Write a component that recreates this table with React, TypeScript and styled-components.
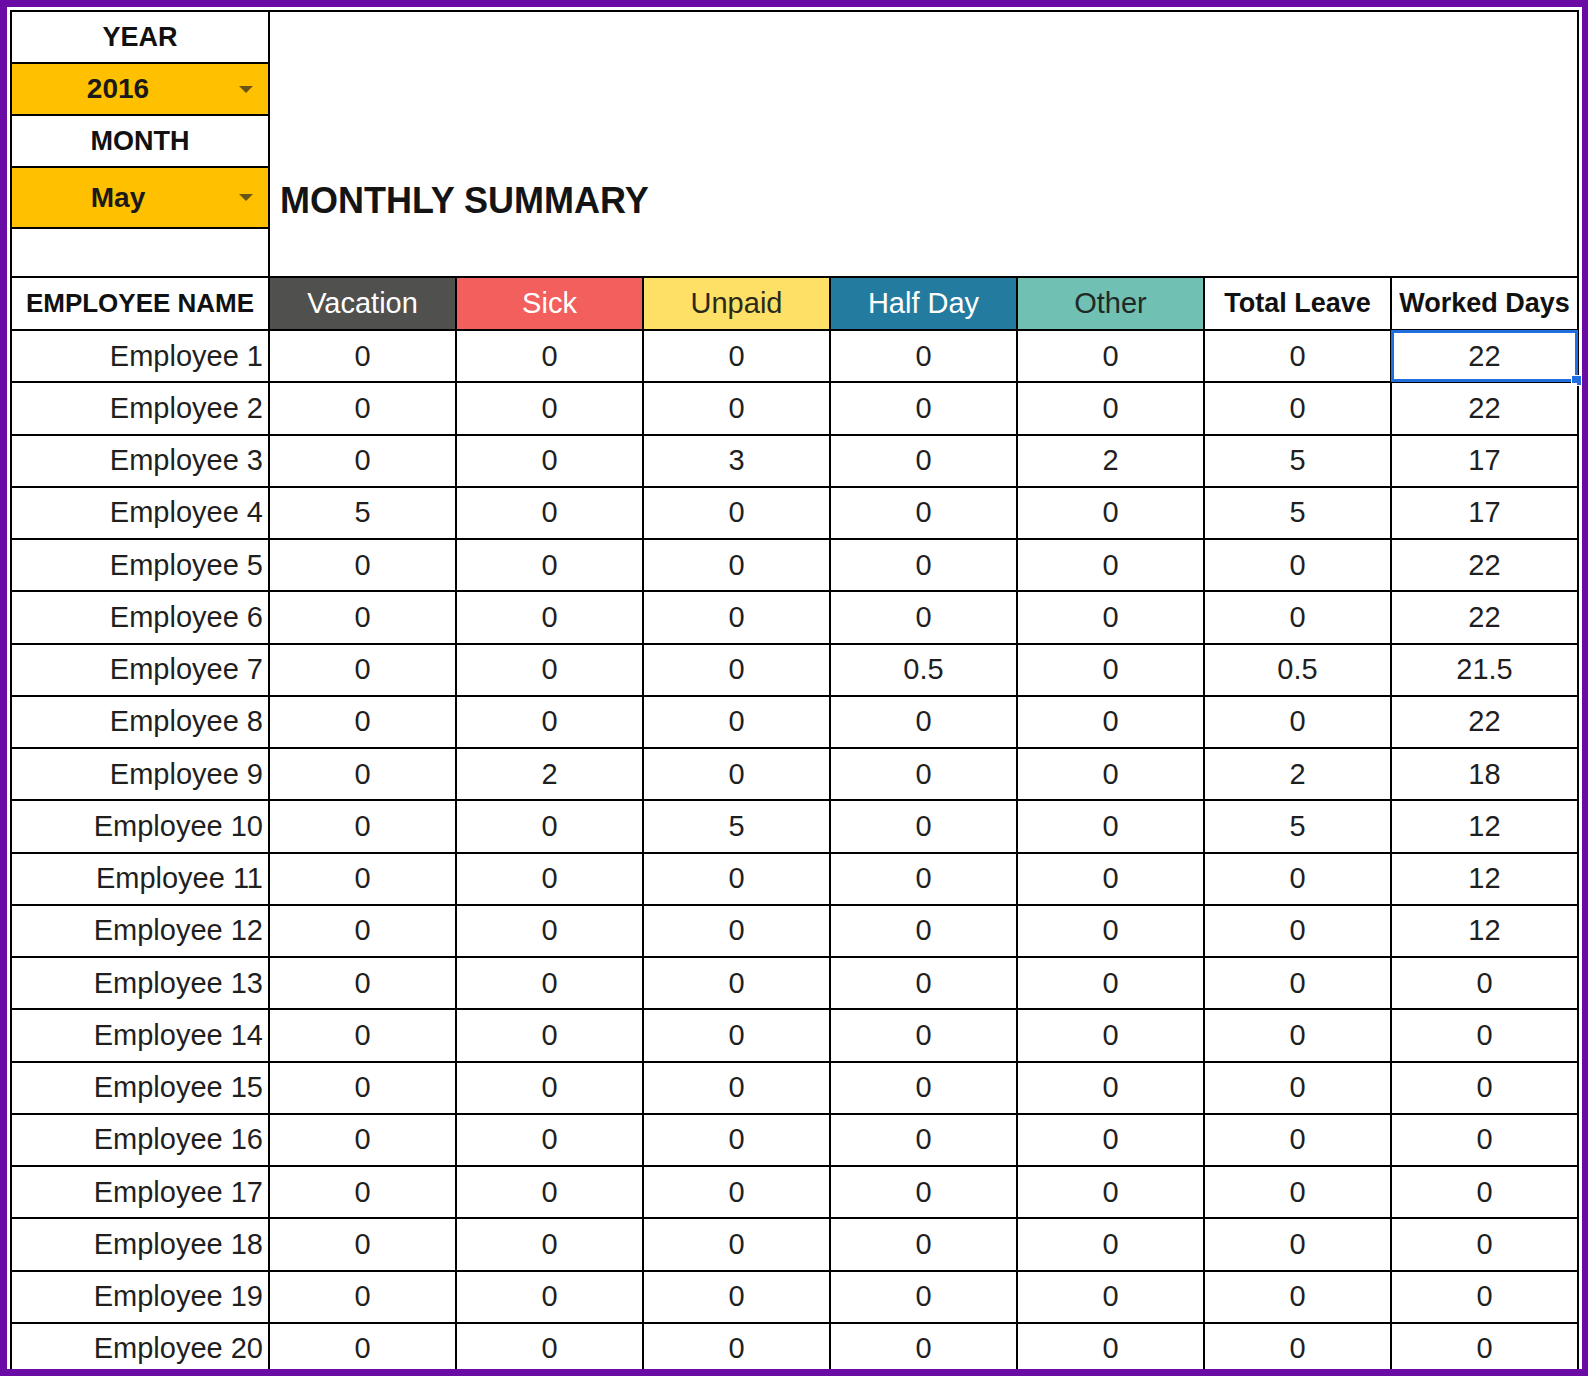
import React from "react";
import styled, { createGlobalStyle } from "styled-components";

const GlobalStyle = createGlobalStyle`
  html, body { margin: 0; padding: 0; background: #6b0ba6; }
  body { font-family: "Liberation Sans", Arial, sans-serif; }
`;

const Frame = styled.div`
  width: 1588px;
  height: 1376px;
  box-sizing: border-box;
  border-style: solid;
  border-color: #6b0ba6;
  border-width: 7px 6px 7px 7px;
  background: #ffffff;
  padding: 3px 3px 0 3px;
  overflow: hidden;
`;

const Sheet = styled.div`
  display: grid;
  width: 1569px;
  box-sizing: border-box;
  grid-template-columns: 256px repeat(7, 1fr);
  grid-template-rows: 50px 50px 50px 59px 47px 51px repeat(20, 50.25px);
  gap: 2px;
  padding: 2px;
  background: #000000;
  font-family: "Liberation Sans", Arial, sans-serif;
  color: #1c1c1c;
`;

const LabelCell = styled.div`
  grid-column: 1;
  background: #ffffff;
  display: flex;
  align-items: center;
  justify-content: center;
  font-weight: 700;
  font-size: 27px;
  color: #111111;
`;

const SelectCell = styled.div`
  grid-column: 1;
  background: #ffc000;
  display: flex;
  align-items: center;
`;

const SelectValue = styled.span`
  flex: 1;
  text-align: center;
  font-weight: 700;
  font-size: 28px;
  color: #1a1a1a;
`;

const SelectArrow = styled.span`
  width: 44px;
  display: flex;
  justify-content: center;
  align-items: center;
  &::before {
    content: "";
    border-left: 7px solid transparent;
    border-right: 7px solid transparent;
    border-top: 7px solid #6b5418;
  }
`;

const TitleArea = styled.div`
  grid-column: 2 / -1;
  grid-row: 1 / 6;
  background: #ffffff;
  padding: 168px 0 0 10px;
`;

const Title = styled.h1`
  margin: 0;
  font-size: 36px;
  font-weight: 700;
  line-height: 41px;
  color: #141414;
`;

const HeaderCell = styled.div<{ $bg: string; $fg: string; $bold?: boolean; $size?: number }>`
  background: ${(p) => p.$bg};
  color: ${(p) => p.$fg};
  font-weight: ${(p) => (p.$bold ? 700 : 400)};
  font-size: ${(p) => p.$size ?? 29}px;
  display: flex;
  align-items: center;
  justify-content: center;
  white-space: nowrap;
  overflow: hidden;
`;

const NameCell = styled.div`
  background: #ffffff;
  display: flex;
  align-items: center;
  justify-content: flex-end;
  padding-right: 5px;
  font-size: 29px;
  color: #1f1f1f;
`;

const NumCell = styled.div`
  position: relative;
  background: #ffffff;
  display: flex;
  align-items: center;
  justify-content: center;
  font-size: 29px;
  color: #1f1f1f;
`;

const Selection = styled.span`
  position: absolute;
  inset: -1px;
  border: 3px solid #1f6fe0;
  pointer-events: none;
`;

const FillHandle = styled.span`
  position: absolute;
  right: -7px;
  bottom: -7px;
  width: 9px;
  height: 9px;
  background: #1f6fe0;
  border: 1px solid #ffffff;
`;

const headers = [
  { label: "Vacation", bg: "#50514f", fg: "#ffffff" },
  { label: "Sick", bg: "#f25f5c", fg: "#ffffff" },
  { label: "Unpaid", bg: "#ffe066", fg: "#2a2a1a" },
  { label: "Half Day", bg: "#247ba0", fg: "#ffffff" },
  { label: "Other", bg: "#70c1b3", fg: "#1f2a26" },
  { label: "Total Leave", bg: "#ffffff", fg: "#111111", bold: true },
  { label: "Worked Days", bg: "#ffffff", fg: "#111111", bold: true },
];

const rows: (string | number)[][] = [
  [0, 0, 0, 0, 0, 0, 22],
  [0, 0, 0, 0, 0, 0, 22],
  [0, 0, 3, 0, 2, 5, 17],
  [5, 0, 0, 0, 0, 5, 17],
  [0, 0, 0, 0, 0, 0, 22],
  [0, 0, 0, 0, 0, 0, 22],
  [0, 0, 0, "0.5", 0, "0.5", "21.5"],
  [0, 0, 0, 0, 0, 0, 22],
  [0, 2, 0, 0, 0, 2, 18],
  [0, 0, 5, 0, 0, 5, 12],
  [0, 0, 0, 0, 0, 0, 12],
  [0, 0, 0, 0, 0, 0, 12],
  [0, 0, 0, 0, 0, 0, 0],
  [0, 0, 0, 0, 0, 0, 0],
  [0, 0, 0, 0, 0, 0, 0],
  [0, 0, 0, 0, 0, 0, 0],
  [0, 0, 0, 0, 0, 0, 0],
  [0, 0, 0, 0, 0, 0, 0],
  [0, 0, 0, 0, 0, 0, 0],
  [0, 0, 0, 0, 0, 0, 0],
];

export default function App() {
  return (
    <>
      <GlobalStyle />
      <Frame>
        <Sheet>
          <LabelCell>YEAR</LabelCell>
          <TitleArea>
            <Title>MONTHLY SUMMARY</Title>
          </TitleArea>
          <SelectCell>
            <SelectValue>2016</SelectValue>
            <SelectArrow />
          </SelectCell>
          <LabelCell>MONTH</LabelCell>
          <SelectCell>
            <SelectValue>May</SelectValue>
            <SelectArrow />
          </SelectCell>
          <LabelCell />

          <HeaderCell $bg="#ffffff" $fg="#111111" $bold $size={26}>
            EMPLOYEE NAME
          </HeaderCell>
          {headers.map((h) => (
            <HeaderCell key={h.label} $bg={h.bg} $fg={h.fg} $bold={h.bold} $size={h.bold ? 27 : 29}>
              {h.label}
            </HeaderCell>
          ))}

          {rows.map((r, i) => (
            <React.Fragment key={i}>
              <NameCell>Employee {i + 1}</NameCell>
              {r.map((v, j) => {
                const selected = i === 0 && j === 6;
                return (
                  <NumCell key={j}>
                    {v}
                    {selected && (
                      <Selection>
                        <FillHandle />
                      </Selection>
                    )}
                  </NumCell>
                );
              })}
            </React.Fragment>
          ))}
        </Sheet>
      </Frame>
    </>
  );
}
